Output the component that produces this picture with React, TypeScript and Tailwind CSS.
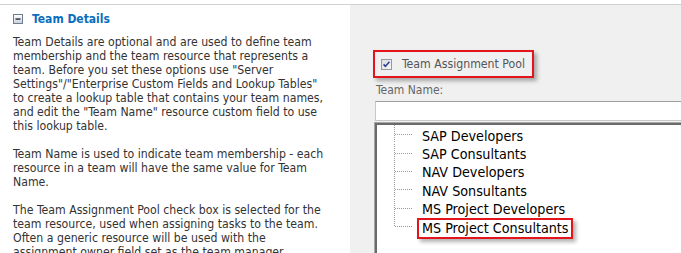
import React from 'react'

const descLines1 = [
  'Team Details are optional and are used to define team',
  'membership and the team resource that represents a',
  'team. Before you set these options use "Server',
  'Settings"/"Enterprise Custom Fields and Lookup Tables"',
  'to create a lookup table that contains your team names,',
  'and edit the "Team Name" resource custom field to use',
  'this lookup table.',
]

const descLines2 = [
  'Team Name is used to indicate team membership - each',
  'resource in a team will have the same value for Team',
  'Name.',
]

const descLines3 = [
  'The Team Assignment Pool check box is selected for the',
  'team resource, used when assigning tasks to the team.',
  'Often a generic resource will be used with the',
  'assignment owner field set as the team manager.',
]

const teams = [
  'SAP Developers',
  'SAP Consultants',
  'NAV Developers',
  'NAV Sonsultants',
  'MS Project Developers',
  'MS Project Consultants',
]

function CollapseIcon() {
  return (
    <svg width="10" height="10" viewBox="0 0 10 10" className="shrink-0">
      <defs>
        <linearGradient id="cg" x1="0" y1="0" x2="0" y2="1">
          <stop offset="0" stopColor="#ffffff" />
          <stop offset="1" stopColor="#c9d0d8" />
        </linearGradient>
      </defs>
      <rect x="0.5" y="0.5" width="9" height="9" fill="url(#cg)" stroke="#6f7d8c" />
      <rect x="2.5" y="4.3" width="5" height="1.5" fill="#2f3b48" />
    </svg>
  )
}

function CheckBox() {
  return (
    <svg width="11" height="11" viewBox="0 0 11 11" className="shrink-0">
      <defs>
        <linearGradient id="cb" x1="0" y1="0" x2="1" y2="1">
          <stop offset="0" stopColor="#dcdcdc" />
          <stop offset="1" stopColor="#f8f8f8" />
        </linearGradient>
      </defs>
      <rect x="0.5" y="0.5" width="10" height="10" fill="url(#cb)" stroke="#8f9aa6" />
      <path d="M2.6 5.4 L4.4 7.4 L8.4 2.8" fill="none" stroke="#2b3f97" strokeWidth="1.6" />
    </svg>
  )
}

function Connector({ last }: { last: boolean }) {
  return (
    <svg width="35" height="18" className="shrink-0">
      <line
        x1="17.5"
        y1="0"
        x2="17.5"
        y2={last ? 9.5 : 18}
        stroke="#9a9a9a"
        strokeDasharray="1 1"
      />
      <line x1="18" y1="9.5" x2="35" y2="9.5" stroke="#9a9a9a" strokeDasharray="1 1" />
    </svg>
  )
}

export default function App() {
  return (
    <div className="w-[681px] h-[253px] overflow-hidden bg-white pt-[4px] font-['DejaVu_Sans_Condensed','DejaVu_Sans',sans-serif]">
      <div className="flex h-full border-t border-[#d0d0d0]">
        {/* left description column */}
        <div className="w-[350px] shrink-0 pl-[13px]">
          <div className="mt-[6px] flex h-[16px] items-center gap-[9px]">
            <CollapseIcon />
            <span className="text-[12px] font-bold leading-[16px] text-[#0a6ebd]">Team Details</span>
          </div>
          <div className="mt-[8px] text-[12.2px] leading-[14px] text-[#333]">
            <p>
              {descLines1.map((l) => (
                <span key={l} className="block whitespace-nowrap">{l}</span>
              ))}
            </p>
            <p className="mt-[14px]">
              {descLines2.map((l) => (
                <span key={l} className="block whitespace-nowrap">{l}</span>
              ))}
            </p>
            <p className="mt-[14px]">
              {descLines3.map((l) => (
                <span key={l} className="block whitespace-nowrap">{l}</span>
              ))}
            </p>
          </div>
        </div>

        {/* right settings column */}
        <div className="flex-1 bg-[#f0f0f0] pl-[23px]">
          <div className="mt-[45px] flex h-[28px] w-[161px] items-center border-2 border-[#e3141b] pl-[6px] shadow-[3px_3px_4px_rgba(0,0,0,0.3)]">
            <CheckBox />
            <span className="ml-[10px] text-[12.2px] leading-[14px] text-[#555]">Team Assignment Pool</span>
          </div>
          <div className="ml-[3px] mt-[5px] text-[12px] leading-[14px] text-[#666]">Team Name:</div>
          <div className="ml-[2px] mt-[4px] h-[20px] w-[330px] border border-[#c8c8c8] border-t-[#a0a0a0] bg-white" />
          <div className="ml-[1px] mt-[1px] h-[140px] w-[330px] border-l border-t border-[#a8a8a8]">
            <div className="h-full border-l-2 border-t-2 border-[#6a6a6a] bg-white">
              {teams.map((t, i) => {
                const last = i === teams.length - 1
                return (
                  <div key={t} className="flex h-[18.4px] items-center">
                    <Connector last={last} />
                    <div className="relative ml-[10px] pt-[3px] text-[14.2px] leading-[16px] text-black whitespace-nowrap">
                      {t}
                      {last && (
                        <span className="absolute -left-[5px] -right-[4px] top-[1px] h-[21px] border-2 border-[#e3141b] shadow-[3px_3px_4px_rgba(0,0,0,0.3)]" />
                      )}
                    </div>
                  </div>
                )
              })}
            </div>
          </div>
        </div>
      </div>
    </div>
  )
}
